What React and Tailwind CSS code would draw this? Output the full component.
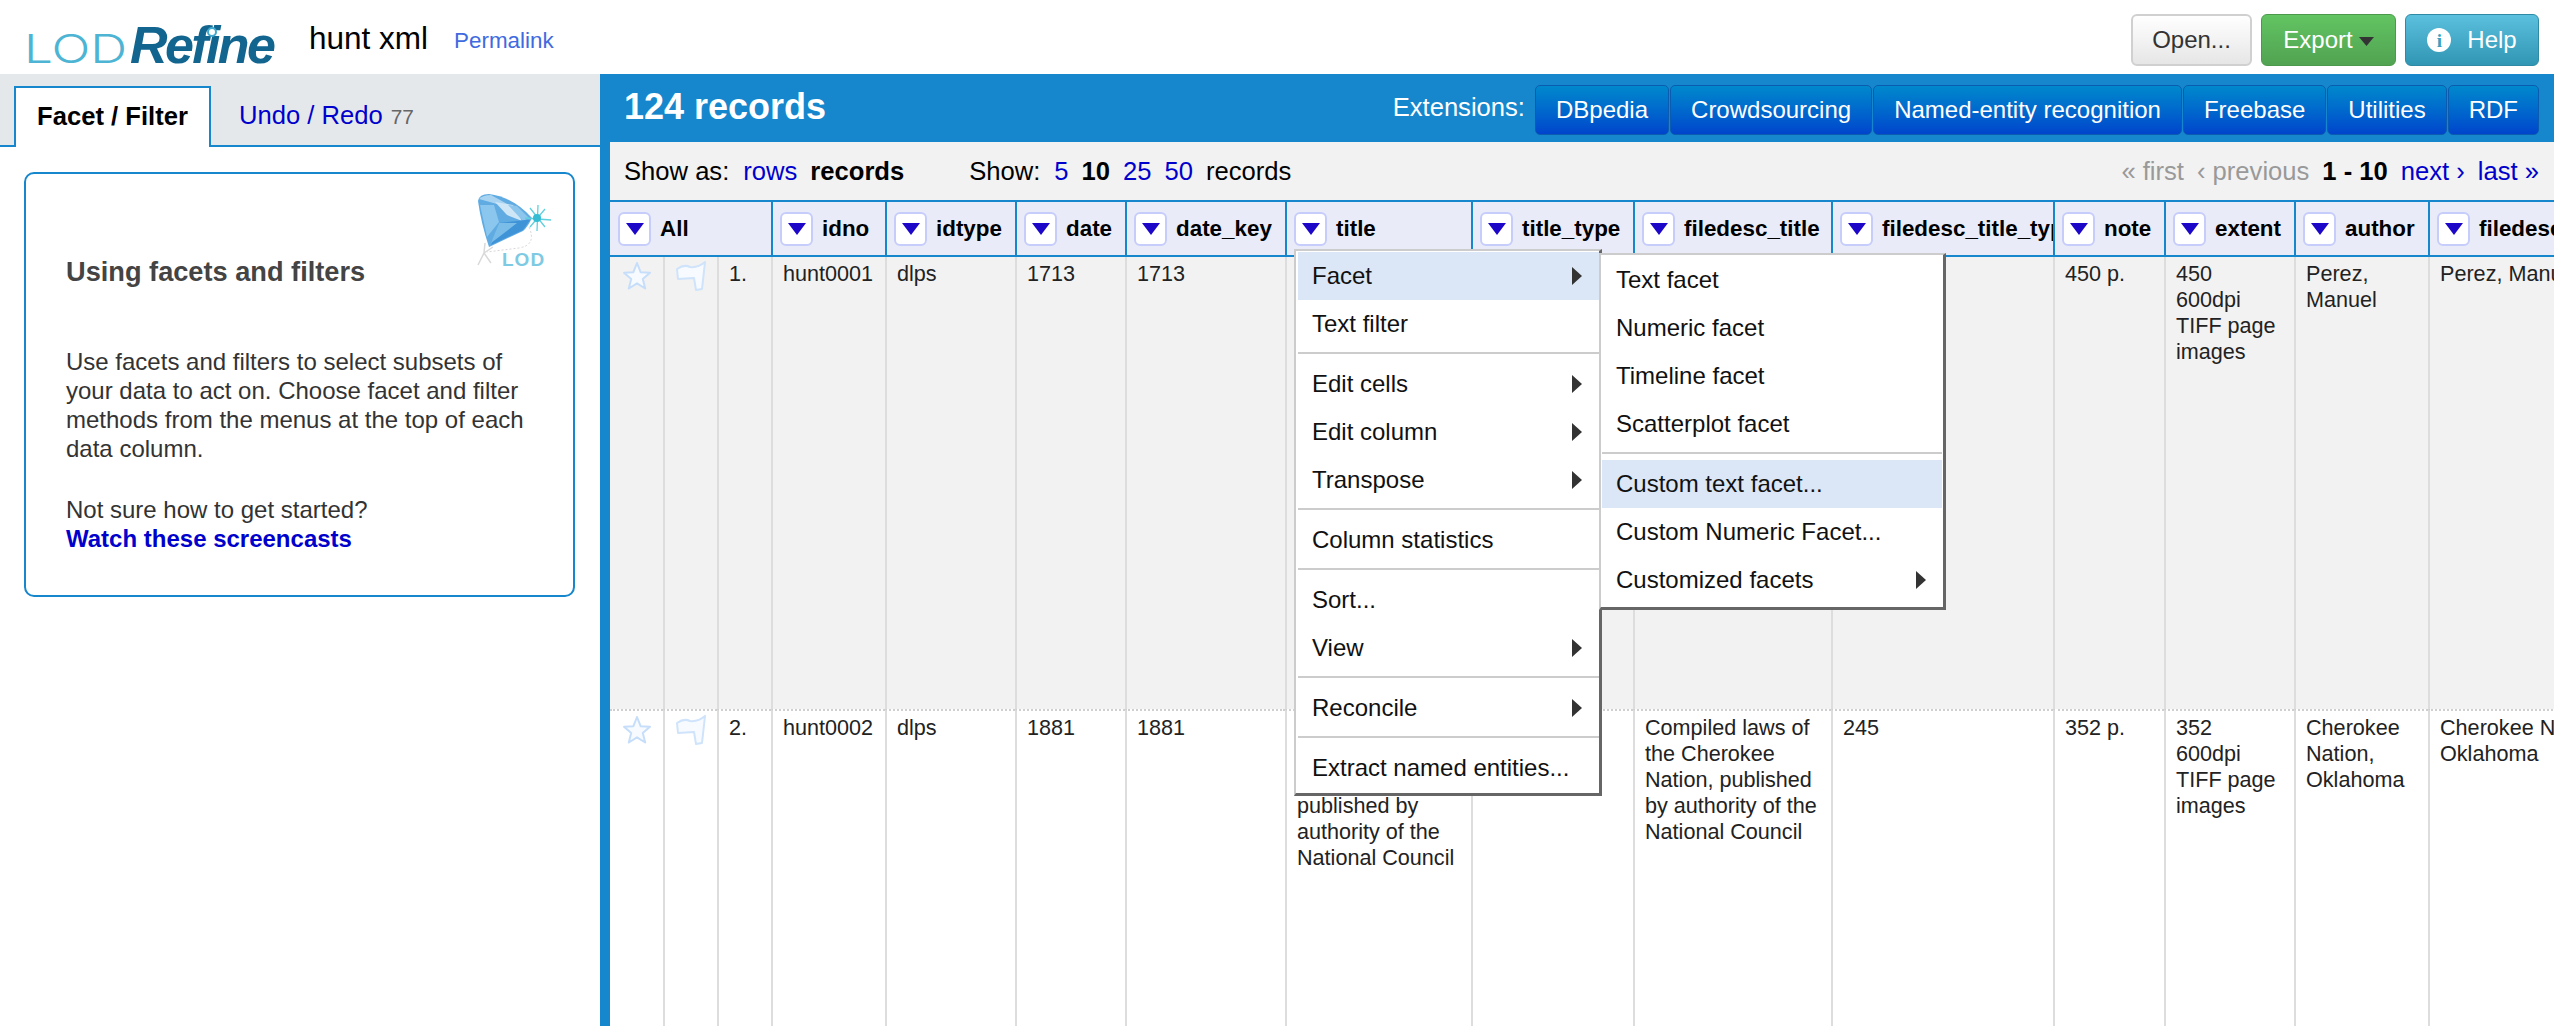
import React from "react";

const font = { fontFamily: '"Liberation Sans", Arial, sans-serif' };

const columns = [
  { name: "idno", w: "w-[114px]" },
  { name: "idtype", w: "w-[130px]" },
  { name: "date", w: "w-[110px]" },
  { name: "date_key", w: "w-[160px]" },
  { name: "title", w: "w-[186px]" },
  { name: "title_type", w: "w-[162px]" },
  { name: "filedesc_title", w: "w-[198px]" },
  { name: "filedesc_title_type", w: "w-[222px]" },
  { name: "note", w: "w-[111px]" },
  { name: "extent", w: "w-[130px]" },
  { name: "author", w: "w-[134px]" },
  { name: "filedesc_author", w: "w-[240px]" },
];

const compiled = "Compiled laws of the Cherokee Nation, published by authority of the National Council";

const rows = [
  {
    n: "1.",
    bg: "bg-[#f2f2f2]",
    h: "h-[452px]",
    line: "",
    cells: ["hunt0001", "dlps", "1713", "1713", "", "", "", "", "450 p.", "450 600dpi TIFF page images", "Perez, Manuel", "Perez, Manuel"],
  },
  {
    n: "2.",
    bg: "bg-white",
    h: "h-[318px]",
    line: "border-t-2 [border-top-style:dotted] border-t-[#cfcfcf]",
    cells: ["hunt0002", "dlps", "1881", "1881", compiled, "", compiled, "245", "352 p.", "352 600dpi TIFF page images", "Cherokee Nation, Oklahoma", "Cherokee Nation, Oklahoma"],
  },
];

function Caret() {
  return (
    <span className="flex h-[34px] w-[33px] shrink-0 items-center justify-center rounded-[6px] border-2 border-[#c6cdfb] bg-white">
      <svg width="18" height="12" viewBox="0 0 18 12">
        <path d="M0 0H18L9 12Z" fill="#1c07c9" />
      </svg>
    </span>
  );
}

function Star() {
  return (
    <svg width="30" height="30" viewBox="0 0 30 30" className="mx-auto">
      <path
        d="M15 2L18.6 11.2L28 11.8L20.8 18L23.2 27.5L15 22.3L6.8 27.5L9.2 18L2 11.8L11.4 11.2Z"
        fill="#f7fbff"
        stroke="#c6defa"
        strokeWidth="2"
        strokeLinejoin="round"
      />
    </svg>
  );
}

function Flag() {
  return (
    <svg width="30" height="30" viewBox="0 0 30 30" className="mx-auto">
      <path
        d="M1 8Q8 3 14 6Q22 7 29 1L26 28L20 29L18 17L2 18Z"
        fill="#f7fbff"
        stroke="#cfe3fb"
        strokeWidth="2"
        strokeLinejoin="round"
      />
    </svg>
  );
}

function Diamond() {
  return (
    <svg width="76" height="76" viewBox="0 0 76 76" className="absolute right-[20px] top-[19px]">
      <path d="M52 34Q60 52 42 55Q26 57 10 59" fill="none" stroke="#d8d8d8" strokeWidth="1" strokeDasharray="2 2" />
      <path d="M8 50L7 60M1 72L7 60L14 70M7 60L16 54" fill="none" stroke="#d9d9d9" strokeWidth="1.5" />
      <path d="M1 8Q2 1 12 1Q36 4 55 25Q50 35 46 38L12 54Q4 30 1 8Z" fill="#5fabe2" />
      <path d="M2 6Q6 2 14 2L34 13L20 11Z" fill="#a9d4f1" />
      <path d="M18 9L36 12L45 28L30 22Z" fill="#cfe6f7" />
      <path d="M31 12L40 13L52 25L46 28Z" fill="#8cc6ec" />
      <path d="M3 12L17 12L22 29L10 44Z" fill="#8ac6ee" />
      <path d="M22 30L48 27L53 27L46 37L14 52Z" fill="#3f94d8" />
      <path d="M22 30L40 30L14 50Z" fill="#7abde9" />
      <path d="M61 12L60 38M48 25L74 27M53 15L68 34M68 16L53 34" stroke="#5fd0de" strokeWidth="1.3" />
      <circle cx="60" cy="25" r="4" fill="#36bcd2" />
      <text x="25" y="73" fontSize="19" fontWeight="700" fill="#7fcae3" style={font} letterSpacing="1">LOD</text>
    </svg>
  );
}

function Arrow({ className = "" }) {
  return (
    <svg width="10" height="18" viewBox="0 0 10 18" className={className}>
      <path d="M0 0L10 9L0 18Z" fill="#333" />
    </svg>
  );
}

function Item({ label, arrow, active, right = "pr-[17px]" }) {
  return (
    <div className={`flex h-[48px] items-center justify-between pl-[14px] ${right} ${active ? "bg-[#dbe7f6]" : ""}`}>
      <span>{label}</span>
      {arrow && <Arrow />}
    </div>
  );
}

function Sep() {
  return <div className="mb-[6px] mt-[4px] h-[2px] bg-[#cccccc]" />;
}

function ExtButton({ label }) {
  return (
    <span className="flex h-[50px] items-center rounded-[5px] border border-[#0a5cb0] bg-gradient-to-b from-[#0088cc] to-[#0044cc] px-[20px] text-[24px] text-white">
      {label}
    </span>
  );
}

export default function App() {
  return (
    <div className="relative h-[1026px] w-[2554px] overflow-hidden bg-white text-black" style={font}>
      <header className="flex h-[74px] items-center bg-white">
        <div className="relative ml-[24px] flex h-[74px] w-[250px] items-center">
          <span className="mt-[24px] w-[103px] origin-left scale-x-[1.28] text-[40px] font-light leading-none text-[#4db4d4]" style={{ fontFamily: "Inter, sans-serif" }}>
            LOD
          </span>
          <span className="ml-[3px] mt-[15px] text-[52px] font-bold italic leading-none tracking-[-2.6px] text-[#12658f]">Refine</span>
          <span className="absolute left-[183px] top-[27px] h-[10px] w-[10px] rounded-full border-2 border-[#3fa9cf] bg-white" />
        </div>
        <span className="ml-[35px] mt-[3px] text-[31.5px] leading-none">hunt xml</span>
        <a className="ml-[26px] mt-[9px] text-[22.4px] leading-none text-[#3f6ae0]">Permalink</a>
        <div className="ml-auto mr-[15px] mt-[6px] flex items-center gap-[9px] text-[24px]">
          <span className="flex h-[52px] w-[121px] items-center justify-center rounded-[6px] border-2 border-[#d0d0d0] bg-gradient-to-b from-white to-[#e6e6e6] text-[#333]">
            Open...
          </span>
          <span className="flex h-[52px] w-[135px] items-center justify-center gap-[6px] rounded-[6px] border border-[#4b9a4b] bg-gradient-to-b from-[#62c462] to-[#51a351] text-white">
            Export
            <svg width="15" height="9" viewBox="0 0 15 9" className="mt-[3px]">
              <path d="M0 0H15L7.5 9Z" fill="#333" />
            </svg>
          </span>
          <span className="flex h-[52px] w-[134px] items-center justify-center gap-[16px] rounded-[6px] border border-[#2f8aa6] bg-gradient-to-b from-[#5bc0de] to-[#2f96b4] text-white">
            <span className="flex h-[24px] w-[24px] items-center justify-center rounded-full bg-white text-[19px] font-bold leading-none text-[#3a9fbd]" style={{ fontFamily: '"Liberation Serif", serif' }}>
              i
            </span>
            Help
          </span>
        </div>
      </header>

      <div className="flex h-[952px]">
        <aside className="w-[600px] shrink-0 bg-white">
          <div className="flex h-[73px] items-end border-b-2 border-[#1687cd] bg-[#e5e8eb] pl-[14px]">
            <div className="-mb-[2px] flex h-[61px] w-[197px] items-center justify-center border-2 border-b-0 border-[#1687cd] bg-white pb-[2px] text-[25.6px] font-bold">
              Facet / Filter
            </div>
            <div className="ml-[28px] flex h-[59px] items-center text-[25.6px] text-[#0000cc]">
              Undo / Redo
              <span className="ml-[8px] mt-[2px] text-[20.8px] text-[#666]">77</span>
            </div>
          </div>
          <div className="relative ml-[24px] mt-[25px] w-[551px] whitespace-nowrap rounded-[10px] border-2 border-[#1687cd] pb-[42px] pl-[40px] pt-[84px] text-[24px] leading-[29px] text-[#333]">
            <Diamond />
            <h2 className="text-[27.2px] font-bold leading-[28px] text-[#444]">Using facets and filters</h2>
            <p className="mt-[61px]">
              Use facets and filters to select subsets of
              <br />
              your data to act on. Choose facet and filter
              <br />
              methods from the menus at the top of each
              <br />
              data column.
            </p>
            <p className="mt-[32px]">Not sure how to get started?</p>
            <p className="font-bold text-[#0000cc]">Watch these screencasts</p>
          </div>
        </aside>

        <main className="flex min-w-0 flex-1 flex-col bg-[#1687cd] pl-[10px]">
          <div className="flex h-[68px] items-start pl-[14px] pr-[15px] text-white">
            <span className="mt-[15px] text-[36px] font-bold leading-none">124 records</span>
            <div className="ml-auto mt-[11px] flex items-center gap-[1px]">
              <span className="mr-[9px] mt-[-6px] text-[25.6px]">Extensions:</span>
              <ExtButton label="DBpedia" />
              <ExtButton label="Crowdsourcing" />
              <ExtButton label="Named-entity recognition" />
              <ExtButton label="Freebase" />
              <ExtButton label="Utilities" />
              <ExtButton label="RDF" />
            </div>
          </div>

          <div className="flex h-[58px] items-center whitespace-pre bg-[#f2f2f2] pl-[14px] pr-[15px] text-[25.6px]">
            <span>Show as:</span>
            <a className="ml-[14px] text-[#0000cc]">rows</a>
            <b className="ml-[13px]">records</b>
            <span className="ml-[65px]">Show:</span>
            <a className="ml-[14px] text-[#0000cc]">5</a>
            <b className="ml-[13px]">10</b>
            <a className="ml-[13px] text-[#0000cc]">25</a>
            <a className="ml-[13px] text-[#0000cc]">50</a>
            <span className="ml-[13px]">records</span>
            <span className="ml-auto text-[#999]">« first</span>
            <span className="ml-[13px] text-[#999]">‹ previous</span>
            <b className="ml-[13px]">1 - 10</b>
            <a className="ml-[13px] text-[#0000cc]">next ›</a>
            <a className="ml-[13px] text-[#0000cc]">last »</a>
          </div>

          <div className="min-h-0 flex-1 overflow-hidden bg-white">
            <table className="w-[2058px] table-fixed border-separate border-spacing-0 text-[21.6px] leading-[26px] text-[#222]">
              <colgroup>
                <col className="w-[53px]" />
                <col className="w-[54px]" />
                <col className="w-[54px]" />
                {columns.map((c) => (
                  <col key={c.name} className={c.w} />
                ))}
              </colgroup>
              <thead>
                <tr>
                  <th colSpan={3} className="h-[57px] border-y-2 border-[#1687cd] bg-[#e9ecf8] pl-[8px] text-left align-middle">
                    <div className="flex items-center gap-[9px] text-[22.4px] font-bold text-black">
                      <Caret />
                      All
                    </div>
                  </th>
                  {columns.map((c) => (
                    <th key={c.name} className="h-[57px] overflow-hidden border-y-2 border-l-2 border-[#1687cd] bg-[#e9ecf8] pl-[7px] text-left align-middle">
                      <div className="flex items-center gap-[9px] whitespace-nowrap text-[22.4px] font-bold text-black">
                        <Caret />
                        {c.name}
                      </div>
                    </th>
                  ))}
                </tr>
              </thead>
              <tbody>
                {rows.map((r) => (
                  <tr key={r.n} className={`${r.bg} ${r.h}`}>
                    <td className={`pt-[4px] align-top ${r.line}`}>
                      <Star />
                    </td>
                    <td className={`border-l-2 border-l-[#dddddd] pt-[4px] align-top ${r.line}`}>
                      <Flag />
                    </td>
                    <td className={`border-l-2 border-l-[#dddddd] pl-[10px] pt-[4px] align-top ${r.line}`}>{r.n}</td>
                    {r.cells.map((v, i) => (
                      <td key={i} className={`border-l-2 border-l-[#dddddd] pl-[10px] pr-[14px] pt-[4px] align-top ${r.line}`}>
                        {v}
                      </td>
                    ))}
                  </tr>
                ))}
              </tbody>
            </table>
          </div>
        </main>
      </div>

      <div className="absolute left-[1294px] top-[249px] w-[308px] border-2 border-b-[3px] border-r-[3px] border-[#cccccc] border-b-[#666666] border-r-[#666666] bg-white pb-[1px] pl-[2px] pt-[1px] text-[24px] leading-none text-[#111]">
        <Item label="Facet" arrow active />
        <Item label="Text filter" />
        <Sep />
        <Item label="Edit cells" arrow />
        <Item label="Edit column" arrow />
        <Item label="Transpose" arrow />
        <Sep />
        <Item label="Column statistics" />
        <Sep />
        <Item label="Sort..." />
        <Item label="View" arrow />
        <Sep />
        <Item label="Reconcile" arrow />
        <Sep />
        <Item label="Extract named entities..." />
      </div>

      <div className="absolute left-[1599px] top-[253px] w-[347px] border-2 border-b-[3px] border-r-[3px] border-[#cccccc] border-b-[#666666] border-r-[#666666] bg-white px-[1px] pb-[3px] pt-[1px] text-[24px] leading-none text-[#111]">
        <Item label="Text facet" />
        <Item label="Numeric facet" />
        <Item label="Timeline facet" />
        <Item label="Scatterplot facet" />
        <Sep />
        <Item label="Custom text facet..." active />
        <Item label="Custom Numeric Facet..." />
        <Item label="Customized facets" arrow right="pr-[16px]" />
      </div>
    </div>
  );
}
